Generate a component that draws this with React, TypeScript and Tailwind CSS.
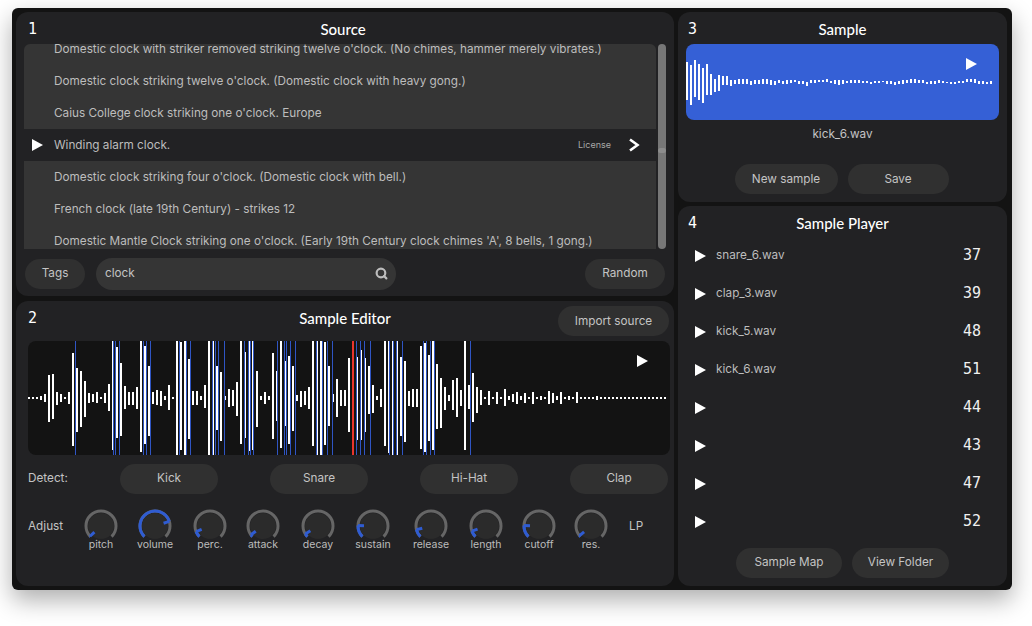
import { Search } from "lucide-react";

const sans = "font-['Inter','Liberation_Sans',sans-serif]";

const rows = [
  "Domestic clock with striker removed striking twelve o'clock. (No chimes, hammer merely vibrates.)",
  "Domestic clock striking twelve o'clock. (Domestic clock with heavy gong.)",
  "Caius College clock striking one o'clock. Europe",
  "Winding alarm clock.",
  "Domestic clock striking four o'clock. (Domestic clock with bell.)",
  "French clock (late 19th Century) - strikes 12",
  "Domestic Mantle Clock striking one o'clock. (Early 19th Century clock chimes 'A', 8 bells, 1 gong.)",
];

const players = [
  ["snare_6.wav", "37"],
  ["clap_3.wav", "39"],
  ["kick_5.wav", "48"],
  ["kick_6.wav", "51"],
  ["", "44"],
  ["", "43"],
  ["", "47"],
  ["", "52"],
];

const knobs: [string, number][] = [
  ["pitch", -133],
  ["volume", 72],
  ["perc.", -112],
  ["attack", -126],
  ["decay", -122],
  ["sustain", -88],
  ["release", -104],
  ["length", -110],
  ["cutoff", -88],
  ["res.", -130],
];

// top and bottom of each bar, px from the top of the blue box
const sampleBars = [
  [18, 56], [21, 61], [16, 53], [20, 56], [24, 59], [20, 51], [30, 51], [35, 48], [31, 47], [32, 41],
  [32, 41], [36, 42], [36, 40], [35, 40], [35, 40], [35, 40], [37, 41], [36, 40], [36, 40], [35, 40],
  [35, 40], [36, 41], [37, 41], [36, 39], [37, 40], [36, 40], [36, 39], [36, 38], [37, 40], [37, 40],
  [38, 42], [36, 39], [36, 39], [36, 38], [36, 38], [35, 38], [37, 39], [36, 40], [36, 41], [36, 40],
  [37, 39], [36, 39], [36, 39], [36, 39], [37, 39], [37, 39], [38, 40], [37, 39], [37, 39], [37, 38],
  [37, 40], [37, 40], [38, 41], [37, 40], [36, 40], [36, 39], [35, 39], [35, 39], [36, 39], [36, 39],
  [38, 40], [37, 40], [37, 40], [36, 39], [37, 39], [38, 39], [38, 40], [38, 40], [37, 39], [37, 39],
  [35, 38], [35, 38], [35, 39], [37, 40], [37, 40], [38, 40], [37, 40],
];

// same thing for the editor, y from the top of the dark box
const editorBars = [
  [56, 58], [56, 58], [56, 58], [55, 59], [53, 61], [34, 81], [33, 78], [51, 64], [53, 61], [56, 58],
  [51, 63], [12, 105], [27, 91], [30, 86], [40, 76], [52, 62], [53, 61], [51, 62], [56, 58], [52, 62],
  [43, 70], [0, 109], [6, 97], [22, 95], [45, 68], [51, 64], [51, 64], [46, 68], [0, 111], [5, 103],
  [25, 95], [51, 63], [49, 64], [50, 65], [55, 59], [44, 69], [56, 58], [0, 114], [1, 109], [0, 114],
  [18, 98], [50, 64], [50, 64], [55, 59], [44, 67], [0, 114], [0, 114], [25, 89], [31, 100], [55, 59],
  [48, 66], [49, 65], [41, 75], [0, 103], [11, 97], [0, 110], [0, 109], [30, 86], [55, 59], [51, 63],
  [55, 59], [12, 98], [30, 80], [0, 107], [20, 85], [15, 103], [25, 90], [54, 60], [50, 66], [50, 64],
  [46, 68], [0, 105], [0, 114], [0, 114], [1, 104], [25, 85], [53, 61], [38, 76], [49, 65], [49, 65],
  [17, 91], [0, 114], [16, 99], [9, 99], [17, 91], [25, 73], [44, 72], [55, 59], [48, 66], [0, 105],
  [0, 112], [0, 114], [0, 114], [16, 95], [20, 101], [50, 65], [48, 66], [48, 66], [5, 108], [2, 111],
  [14, 100], [0, 109], [23, 88], [37, 87], [46, 69], [54, 60], [39, 69], [37, 76], [49, 65], [0, 109],
  [44, 68], [32, 81], [46, 72], [49, 64], [56, 58], [50, 64], [56, 58], [51, 63], [56, 58], [48, 65],
  [55, 59], [53, 61], [51, 63], [55, 59], [52, 62], [56, 58], [51, 63], [56, 58], [55, 59], [56, 58],
  [50, 63], [52, 62], [55, 59], [51, 63], [56, 58], [55, 59], [56, 58], [51, 62], [56, 58], [56, 58],
  [56, 58], [56, 58], [55, 59], [56, 58], [56, 58], [56, 58], [56, 58], [56, 58], [56, 58], [56, 58],
  [56, 58], [56, 58], [56, 58], [56, 58], [56, 58], [56, 58], [56, 58], [56, 58], [56, 58], [56, 58],
];

// onset markers, px from the left of the dark box
const onsets = [
  47, 85, 87, 91, 115, 118, 122, 151, 158, 162, 184, 187, 190, 196, 216, 220, 222, 225, 249, 256, 258,
  262, 267, 288, 294, 299, 304, 328, 332, 336, 342, 361, 365, 368, 374, 395, 398, 402, 406, 442,
];

function Play({ className = "" }: { className?: string }) {
  return (
    <svg viewBox="0 0 11 12" className={`h-3 w-[11px] shrink-0 ${className}`}>
      <path d="M0 0 L11 6 L0 12 Z" fill="#fff" />
    </svg>
  );
}

function Pill({ children, className = "" }: { children: React.ReactNode; className?: string }) {
  return (
    <button className={`h-[30px] shrink-0 rounded-full bg-[#303030] pt-px text-[11.75px] text-[#c4c4c4] ${className}`}>
      {children}
    </button>
  );
}

function Header({ n, title }: { n: string; title: string }) {
  return (
    <div className="grid grid-cols-[1fr_auto_1fr] items-center">
      <span className="font-['DejaVu_Sans_Mono',monospace] text-[15px] text-white">{n}</span>
      <span className="font-['Lato',sans-serif] text-[15px] font-medium text-white">{title}</span>
    </div>
  );
}

function polar(r: number, deg: number) {
  const a = (deg * Math.PI) / 180;
  return [18 + r * Math.sin(a), 18 - r * Math.cos(a)];
}

function arc(r: number, from: number, to: number) {
  const [x1, y1] = polar(r, from);
  const [x2, y2] = polar(r, to);
  return `M${x1} ${y1} A${r} ${r} 0 ${to - from > 180 ? 1 : 0} 1 ${x2} ${y2}`;
}

function Knob({ label, value }: { label: string; value: number }) {
  const [ix, iy] = polar(9, value);
  const [ox, oy] = polar(15, value);
  return (
    <div className="flex flex-col items-center">
      <svg viewBox="0 0 36 36" className="h-9 w-9">
        <circle cx="18" cy="18" r="13" fill="#2b2b2b" />
        <path d={arc(15, -135, 135)} fill="none" stroke="#666" strokeWidth="3" />
        <path d={arc(15, -135, value)} fill="none" stroke="#2f5cd2" strokeWidth="3" />
        <line x1={ix} y1={iy} x2={ox} y2={oy} stroke="#2f5cd2" strokeWidth="3" />
      </svg>
      <span className="-mt-[6px] whitespace-nowrap text-[10.5px] leading-[14px] text-[#bdbdbd]">{label}</span>
    </div>
  );
}

function EditorWave() {
  return (
    <svg width="642" height="114" className="block" shapeRendering="crispEdges">
      {editorBars.map(([t, b], i) => (
        <rect key={i} x={i * 4} y={t} width="2" height={b - t} fill="#fff" />
      ))}
      {onsets.map((x) => (
        <rect key={x} x={x} y="0" width="1" height="114" fill="#2f55c4" />
      ))}
      <rect x="324" y="0" width="2" height="114" fill="#e8352b" />
    </svg>
  );
}

function SampleWave() {
  return (
    <svg width="313" height="76" className="block" shapeRendering="crispEdges">
      {sampleBars.map(([t, b], i) => (
        <rect key={i} x={i * 4} y={t} width="2" height={b - t} fill="#fff" />
      ))}
    </svg>
  );
}

export default function App() {
  return (
    <div className={`h-[626px] w-[1032px] overflow-hidden bg-white pl-3 pt-2 ${sans}`}>
      <div className="flex h-[582px] w-[1000px] gap-1 rounded-md bg-[#131313] p-1 shadow-[0_10px_24px_rgba(0,0,0,0.32)]">
        <div className="flex w-[658px] flex-col gap-[5px]">
          {/* source */}
          <section className="h-[284px] rounded-xl bg-[#222224] px-2 pt-[6px]">
            <div className="pl-1 pr-2">
              <Header n="1" title="Source" />
            </div>
            <div className="mt-[3px] flex h-[205px] gap-[2px]">
              <div className="w-[632px] overflow-hidden rounded-t-md bg-[#353535]">
                <div className="-mt-[11px]">
                  {rows.map((r, i) =>
                    i === 3 ? (
                      <div key={r} className="flex h-8 items-center bg-[#222224] pl-2 pr-4">
                        <Play className="mr-[11px]" />
                        <span className="pt-[3px] text-[11.75px] text-[#bdbdbd]">{r}</span>
                        <span className="ml-auto text-[9px] text-[#a8a8a8]">License</span>
                        <svg viewBox="0 0 12 14" className="ml-[17px] h-[14px] w-3">
                          <path d="M2 1.5 L9.5 7 L2 12.5" fill="none" stroke="#fff" strokeWidth="2.6" />
                        </svg>
                      </div>
                    ) : (
                      <div key={r} className="flex h-8 items-center pl-[30px]">
                        <span className="whitespace-nowrap pt-[3px] text-[11.75px] text-[#bdbdbd]">{r}</span>
                      </div>
                    ),
                  )}
                </div>
              </div>
              <div className="relative w-2 rounded-full bg-[#777]">
                <div className="absolute left-0 top-[104px] h-[5px] w-2 rounded-full bg-[#8c8c8c]" />
              </div>
            </div>
            <div className="mt-[9px] flex items-center pl-px pr-[1px]">
              <Pill className="w-[60px]">Tags</Pill>
              <div className="ml-[11px] flex h-8 w-[300px] items-center justify-between rounded-full bg-[#353535] pl-[9px] pr-2">
                <span className="text-[11.75px] text-[#c4c4c4]">clock</span>
                <Search size={13} strokeWidth={4} className="text-[#bdbdbd]" />
              </div>
              <Pill className="ml-auto w-20">Random</Pill>
            </div>
          </section>

          {/* editor */}
          <section className="h-[285px] rounded-xl bg-[#222224] pl-3 pr-[5px] pt-[5px]">
            <div className="relative">
              <div className="pt-px pr-[7px]">
                <Header n="2" title="Sample Editor" />
              </div>
              <Pill className="absolute right-0 top-0 w-[111px]">Import source</Pill>
            </div>
            <div className="relative mt-[11px] h-[114px] w-[642px] overflow-hidden rounded-lg bg-[#131313]">
              <EditorWave />
              <Play className="absolute left-[609px] top-[14px]" />
            </div>
            <div className="mt-[9px] flex items-center">
              <span className="w-[92px] pt-px text-[11.75px] text-[#c4c4c4]">Detect:</span>
              <div className="flex gap-[52px]">
                <Pill className="w-[98px]">Kick</Pill>
                <Pill className="w-[98px]">Snare</Pill>
                <Pill className="w-[98px]">Hi-Hat</Pill>
                <Pill className="w-[98px]">Clap</Pill>
              </div>
            </div>
            <div className="mt-[14px] flex">
              <span className="w-[46px] pt-[10px] text-[11.75px] text-[#c4c4c4]">Adjust</span>
              <div className="grid grid-cols-[54px_54px_56px_50px_60px_50px_66px_44px_62px_42px]">
                {knobs.map(([label, value]) => (
                  <Knob key={label} label={label} value={value} />
                ))}
              </div>
              <span className="ml-[17px] pt-[10px] text-[11.75px] text-[#c4c4c4]">LP</span>
            </div>
          </section>
        </div>

        <div className="flex w-[329px] flex-col gap-1">
          {/* sample */}
          <section className="flex h-[190px] flex-col rounded-xl bg-[#222224] px-2 pt-[6px]">
            <div className="px-[2px]">
              <Header n="3" title="Sample" />
            </div>
            <div className="relative mt-[3px] h-[76px] overflow-hidden rounded-lg bg-[#3560d6]">
              <SampleWave />
              <Play className="absolute left-[280px] top-[14px]" />
            </div>
            <div className="mt-[6px] text-center text-[11.75px] text-[#c4c4c4]">kick_6.wav</div>
            <div className="mt-[21px] flex justify-center gap-[10px] pr-[2px]">
              <Pill className="w-[103px]">New sample</Pill>
              <Pill className="w-[101px]">Save</Pill>
            </div>
          </section>

          {/* player */}
          <section className="flex h-[380px] flex-col rounded-xl bg-[#222224] px-[10px] pt-[6px]">
            <Header n="4" title="Sample Player" />
            <div className="mt-[2px] pr-4">
              {players.map(([name, note]) => (
                <div key={note} className="flex h-[38px] items-center pl-[7px]">
                  <Play />
                  <span className="ml-[10px] text-[11.75px] text-[#bdbdbd]">{name}</span>
                  <span className="ml-auto font-['DejaVu_Sans_Mono',monospace] text-[15px] text-[#f0f0f0]">{note}</span>
                </div>
              ))}
            </div>
            <div className="mt-[7px] flex justify-center gap-[10px]">
              <Pill className="w-[106px]">Sample Map</Pill>
              <Pill className="w-[97px]">View Folder</Pill>
            </div>
          </section>
        </div>
      </div>
    </div>
  );
}
